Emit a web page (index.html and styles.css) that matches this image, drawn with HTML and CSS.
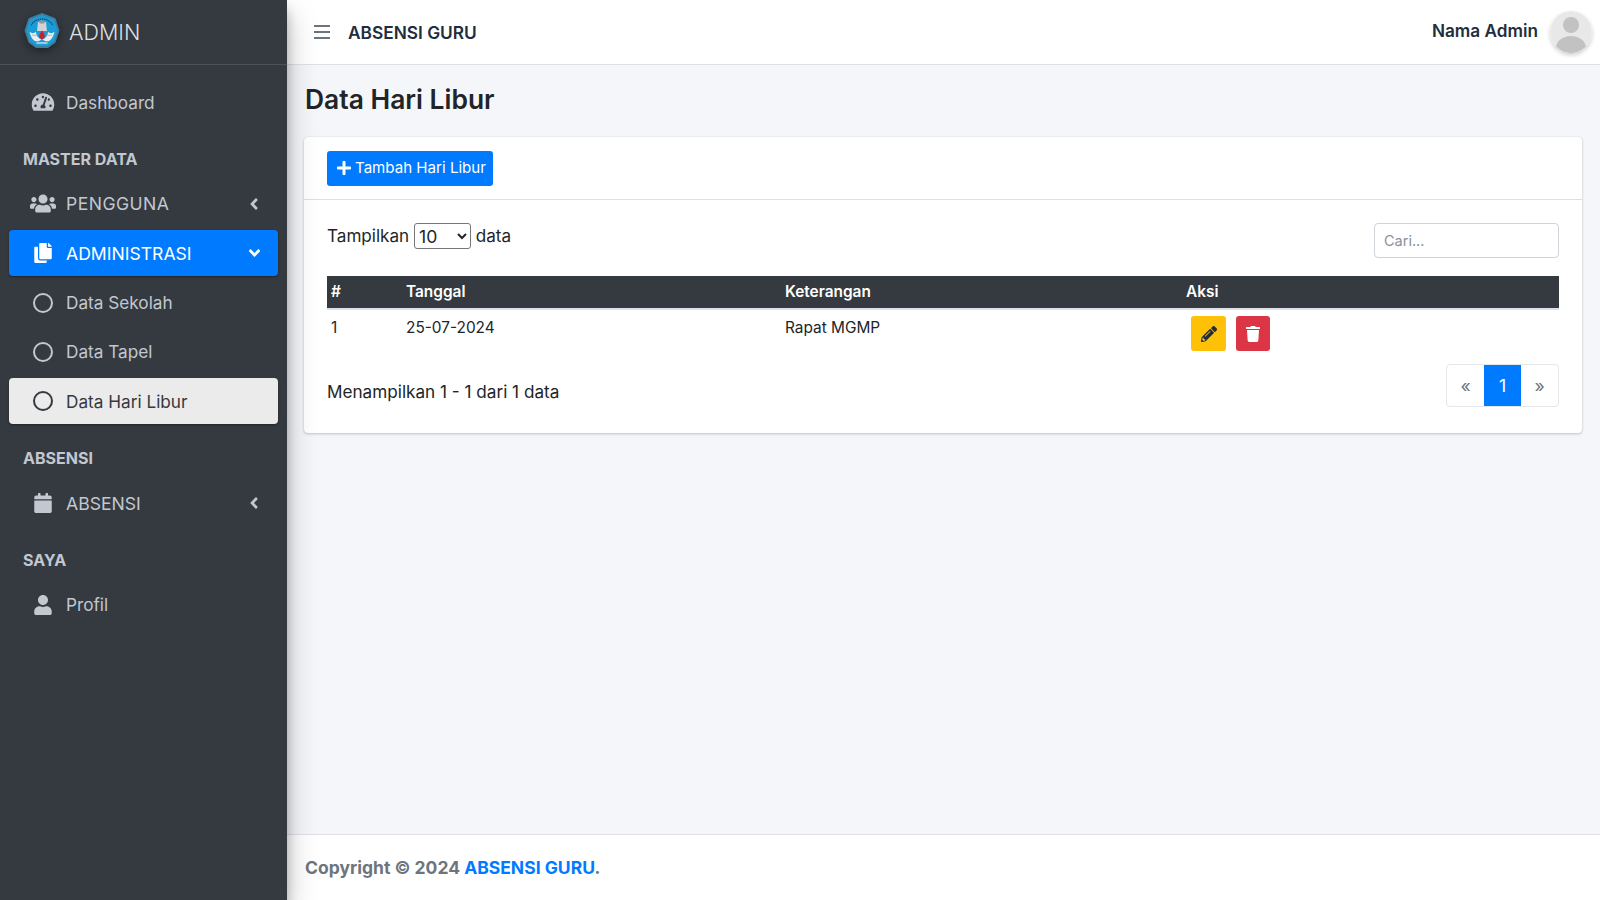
FILE: index.html
```html
<!DOCTYPE html>
<html lang="id">
<head>
<meta charset="utf-8">
<title>Data Hari Libur</title>
<link rel="stylesheet" href="styles.css">
</head>
<body>
<div class="app">
  <aside class="sidebar">
    <div class="brand">
      <svg class="logo" viewBox="0 0 36 36"><path d="M18 1 31 6 35 18 31 30 24 35 12 35 5 30 1 18 5 6Z" fill="#3f7d9f" stroke="#3f7d9f" stroke-width="1" stroke-linejoin="round"/><path d="M18 2.500 30 7 33.500 18 30 29 23.500 33.500 12.500 33.500 6 29 2.500 18 6 7Z" fill="#1a9cd8"/><path d="M7 13A12.500 12.500 0 0 1 29 13" fill="none" stroke="#0e4f78" stroke-width="1.300" stroke-dasharray="1.500 .7"/><path d="M14 9.500h8l1 9h-10z" fill="#cfd3d6"/><path d="M15.500 8h5v3h-5z" fill="#8e979d"/><path d="M17.500 27C12 31 8 28.500 5.500 19.500c2.500 1.500 4.500 1.500 6.500 0 .2 3.500 2 6 5.500 7.500z" fill="#eceded"/><path d="M18.500 27C24 31 28 28.500 30.500 19.500c-2.500 1.500-4.500 1.500-6.500 0-.2 3.500-2 6-5.500 7.500z" fill="#eceded"/><path d="M8 22.500c2 .5 4 .5 5.500-.5M28 22.500c-2 .5-4 .5-5.500-.5" stroke="#9aa3a8" stroke-width=".8" fill="none"/><path d="M18 18c1.800 2.500 2.700 4.300 2.700 5.800a2.700 2.700 0 0 1-5.400 0c0-1.500.9-3.300 2.700-5.800z" fill="#c8202f"/><path d="M12.500 30.500h11" stroke="#e9edef" stroke-width="1.200"/></svg>
      <span class="brand-text">ADMIN</span>
    </div>
    <nav class="menu">
      <a class="item"><span class="ico"><svg class="i20" viewBox="0 0 576 512"><path d="M288 32C128.94 32 0 160.94 0 320c0 52.8 14.25 102.26 39.06 144.8 5.61 9.62 16.3 15.2 27.44 15.2h443c11.14 0 21.83-5.58 27.44-15.2C561.75 422.26 576 372.8 576 320c0-159.06-128.94-288-288-288zm0 64c14.71 0 26.58 10.13 30.32 23.65-1.11 2.26-2.64 4.23-3.45 6.67l-9.22 27.67c-5.13 3.49-10.97 6.01-17.64 6.01-17.67 0-32-14.33-32-32S270.33 96 288 96zM96 384c-17.67 0-32-14.33-32-32s14.33-32 32-32 32 14.33 32 32-14.33 32-32 32zm48-160c-17.67 0-32-14.33-32-32s14.33-32 32-32 32 14.33 32 32-14.33 32-32 32zm246.77-72.41l-61.33 184C343.13 347.33 352 364.54 352 384c0 11.72-3.38 22.55-8.88 32H232.88c-5.5-9.45-8.88-20.28-8.88-32 0-33.94 26.5-61.43 59.9-63.59l61.34-184.01c4.17-12.56 17.73-19.45 30.36-15.17 12.57 4.19 19.35 17.79 15.17 30.36zm14.66 57.2l15.52-46.55c3.47-1.29 7.13-2.23 11.05-2.23 17.67 0 32 14.33 32 32s-14.33 32-32 32c-11.38-.01-20.89-6.28-26.57-15.22zM480 384c-17.67 0-32-14.33-32-32s14.33-32 32-32 32 14.33 32 32-14.33 32-32 32z"/></svg></span>Dashboard</a>
      <div class="head">MASTER DATA</div>
      <a class="item caps wide"><span class="ico"><svg class="i20 i-wide" viewBox="0 0 640 512"><path d="M96 224c35.3 0 64-28.7 64-64s-28.7-64-64-64-64 28.7-64 64 28.7 64 64 64zm448 0c35.3 0 64-28.7 64-64s-28.7-64-64-64-64 28.7-64 64 28.7 64 64 64zm32 32h-64c-17.6 0-33.5 7.1-45.1 18.6 40.3 22.1 68.9 62 75.1 109.4h66c17.7 0 32-14.3 32-32v-32c0-35.3-28.7-64-64-64zm-256 0c61.9 0 112-50.1 112-112S381.9 32 320 32 208 82.1 208 144s50.1 112 112 112zm76.8 32h-8.3c-20.8 10-43.9 16-68.5 16s-47.6-6-68.5-16h-8.3C179.6 288 128 339.6 128 403.2V432c0 26.5 21.5 48 48 48h288c26.5 0 48-21.5 48-48v-28.8c0-63.6-51.6-115.2-115.2-115.2zm-223.7-13.4C161.5 263.1 145.6 256 128 256H64c-35.3 0-64 28.7-64 64v32c0 17.7 14.3 32 32 32h65.9c6.3-47.4 34.9-87.3 75.2-109.4z"/></svg></span>PENGGUNA<svg class="chev" viewBox="0 0 256 512"><path d="M31.7 239l136-136c9.4-9.4 24.6-9.4 33.9 0l22.6 22.6c9.4 9.4 9.4 24.6 0 33.9L127.9 256l96.4 96.4c9.4 9.4 9.4 24.6 0 33.9L201.7 409c-9.4 9.4-24.6 9.4-33.9 0l-136-136c-9.5-9.4-9.5-24.6-.1-34z"/></svg></a>
      <a class="item caps primary"><span class="ico"><svg class="i20" viewBox="0 0 448 512"><path d="M320 448v40c0 13.255-10.745 24-24 24H24c-13.255 0-24-10.745-24-24V120c0-13.255 10.745-24 24-24h72v296c0 30.879 25.121 56 56 56h168zm0-344V0H152c-13.255 0-24 10.745-24 24v368c0 13.255 10.745 24 24 24h272c13.255 0 24-10.745 24-24V128H344c-13.2 0-24-10.8-24-24zm120.971-31.029L375.029 7.029A24 24 0 0 0 358.059 0H352v96h96v-6.059a24 24 0 0 0-7.029-16.97z"/></svg></span>ADMINISTRASI<svg class="chev chev-down" viewBox="0 0 320 512"><path d="M143 352.3L7 216.3c-9.4-9.4-9.4-24.6 0-33.9l22.6-22.6c9.4-9.4 24.6-9.4 33.9 0l96.4 96.4 96.4-96.4c9.4-9.4 24.6-9.4 33.9 0l22.6 22.6c9.4 9.4 9.4 24.6 0 33.9l-136 136c-9.2 9.4-24.4 9.4-33.8 0z"/></svg></a>
      <a class="item"><span class="ico"><span class="ring"></span></span>Data Sekolah</a>
      <a class="item"><span class="ico"><span class="ring"></span></span>Data Tapel</a>
      <a class="item current"><span class="ico"><span class="ring"></span></span>Data Hari Libur</a>
      <div class="head">ABSENSI</div>
      <a class="item caps"><span class="ico"><svg class="i20" viewBox="0 0 448 512"><path d="M12 192h424c6.6 0 12 5.4 12 12v260c0 26.5-21.5 48-48 48H48c-26.5 0-48-21.5-48-48V204c0-6.6 5.4-12 12-12zm436-44v-36c0-26.5-21.5-48-48-48h-48V12c0-6.6-5.4-12-12-12h-40c-6.6 0-12 5.4-12 12v52H160V12c0-6.6-5.4-12-12-12h-40c-6.6 0-12 5.4-12 12v52H48C21.5 64 0 85.5 0 112v36c0 6.6 5.4 12 12 12h424c6.6 0 12-5.4 12-12z"/></svg></span>ABSENSI<svg class="chev" viewBox="0 0 256 512"><path d="M31.7 239l136-136c9.4-9.4 24.6-9.4 33.9 0l22.6 22.6c9.4 9.4 9.4 24.6 0 33.9L127.9 256l96.4 96.4c9.4 9.4 9.4 24.6 0 33.9L201.7 409c-9.4 9.4-24.6 9.4-33.9 0l-136-136c-9.5-9.4-9.5-24.6-.1-34z"/></svg></a>
      <div class="head">SAYA</div>
      <a class="item"><span class="ico"><svg class="i20" viewBox="0 0 448 512"><path d="M224 256c70.7 0 128-57.3 128-128S294.7 0 224 0 96 57.3 96 128s57.3 128 128 128zm89.6 32h-16.7c-22.2 10.2-46.9 16-72.9 16s-50.6-5.8-72.9-16h-16.7C60.2 288 0 348.2 0 422.4V464c0 26.5 21.5 48 48 48h352c26.5 0 48-21.5 48-48v-41.6c0-74.2-60.2-134.4-134.4-134.4z"/></svg></span>Profil</a>
    </nav>
  </aside>
  <div class="main">
    <header class="topbar">
      <div class="burger"><span></span><span></span><span></span></div>
      <div class="app-name">ABSENSI GURU</div>
      <div class="user">
        <span class="user-name">Nama Admin</span>
        <svg class="avatar" viewBox="0 0 42 42"><defs><clipPath id="av"><circle cx="21" cy="21" r="21"/></clipPath></defs><g clip-path="url(#av)"><rect width="42" height="42" fill="#e8e8e8"/><circle cx="21" cy="14" r="8" fill="#c2c2c2"/><ellipse cx="21" cy="37" rx="15" ry="12" fill="#c2c2c2"/></g></svg>
      </div>
    </header>
    <main class="content">
      <h1 class="title">Data Hari Libur</h1>
      <section class="card">
        <div class="card-head">
          <button class="btn-add"><svg class="plus" viewBox="0 0 448 512"><path d="M416 208H272V64c0-17.67-14.33-32-32-32h-32c-17.67 0-32 14.33-32 32v144H32c-17.67 0-32 14.33-32 32v32c0 17.67 14.33 32 32 32h144v144c0 17.67 14.33 32 32 32h32c17.67 0 32-14.33 32-32V304h144c17.67 0 32-14.33 32-32v-32c0-17.67-14.33-32-32-32z"/></svg>Tambah Hari Libur</button>
        </div>
        <div class="card-body">
          <div class="tools">
            <div class="length">Tampilkan <select class="sel"><option>10</option></select> data</div>
            <input class="search" placeholder="Cari...">
          </div>
          <table class="tbl">
            <thead>
              <tr><th class="c1">#</th><th class="c2">Tanggal</th><th class="c3">Keterangan</th><th>Aksi</th></tr>
            </thead>
            <tbody>
              <tr>
                <td>1</td><td>25-07-2024</td><td>Rapat MGMP</td>
                <td><div class="acts">
                  <span class="act edit"><svg class="i16" viewBox="0 0 512 512"><path d="M497.9 142.1l-46.1 46.1c-4.7 4.7-12.3 4.7-17 0l-111-111c-4.7-4.7-4.7-12.3 0-17l46.1-46.1c18.7-18.7 49.1-18.7 67.9 0l60.1 60.1c18.8 18.7 18.8 49.1 0 67.9zM284.2 99.8L21.6 362.4.4 483.9c-2.9 16.4 11.4 30.6 27.8 27.8l121.5-21.3 262.6-262.6c4.7-4.7 4.7-12.3 0-17l-111-111c-4.8-4.7-12.4-4.7-17.1 0zM124.1 339.9c-5.5-5.5-5.5-14.3 0-19.8l154-154c5.5-5.5 14.3-5.5 19.8 0s5.5 14.3 0 19.8l-154 154c-5.5 5.5-14.3 5.5-19.8 0zM88 424h48v36.3l-64.5 11.3-31.1-31.1L51.7 376H88v48z"/></svg></span>
                  <span class="act del"><svg class="i16" viewBox="0 0 448 512"><path d="M432 32H312l-9.4-18.7A24 24 0 0 0 281.1 0H166.8a23.72 23.72 0 0 0-21.4 13.3L136 32H16A16 16 0 0 0 0 48v32a16 16 0 0 0 16 16h416a16 16 0 0 0 16-16V48a16 16 0 0 0-16-16zM53.2 467a48 48 0 0 0 47.9 45h245.8a48 48 0 0 0 47.9-45L416 128H32z"/></svg></span>
                </div></td>
              </tr>
            </tbody>
          </table>
          <div class="foot-row">
            <div class="info">Menampilkan 1 - 1 dari 1 data</div>
            <div class="pager"><span class="pg pg-first">«</span><span class="pg pg-on">1</span><span class="pg pg-last">»</span></div>
          </div>
        </div>
      </section>
    </main>
    <footer class="footer"><strong>Copyright © 2024 <a class="foot-link">ABSENSI GURU</a>.</strong></footer>
  </div>
</div>
</body>
</html>
```
FILE: styles.css
```css
* { box-sizing: border-box; }
html, body { height: 100%; margin: 0; }
body { font-family: Inter, "Noto Sans", sans-serif; font-size: 16px; color: #212529; background: #f4f6f9; overflow: hidden; }
.app { display: flex; height: 900px; }
.sidebar { width: 287px; flex: none; background: #343a40; box-shadow: 0 14px 28px rgba(0,0,0,.25), 0 10px 10px rgba(0,0,0,.22); z-index: 2; }
.brand { height: 65px; display: flex; align-items: center; padding-left: 24px; gap: 9px; border-bottom: 1px solid #4b545c; }
.logo { width: 36px; height: 37px; filter: drop-shadow(0 3px 4px rgba(0,0,0,.4)); margin-top: -4px; }
.brand-text { font-size: 21.5px; font-weight: 300; color: rgba(255,255,255,.85); margin-top: -1px; }
.menu { display: flex; flex-direction: column; padding: 14px 9px 8px; }
.item { height: 46px; margin-bottom: 3.4px; display: flex; align-items: center; border-radius: 4px; color: #c2c7d0; font-size: 17.2px; padding-left: 14px; padding-right: 19px; }
.caps { font-size: 17.6px; }
.wide { letter-spacing: .45px; }
.ico { width: 43px; flex: none; display: flex; justify-content: center; padding-right: 4px; color: #c2c7d0; }
.i20 { height: 20px; width: 24px; fill: currentColor; }
.i-wide { width: 26px; height: 21px; }
.ring { width: 20px; height: 20px; border: 2px solid currentColor; border-radius: 50%; }
.chev { margin-left: auto; width: 10px; height: 18px; fill: currentColor; }
.chev-down { width: 13px; margin-right: -2px; }
.primary { background: #007bff; color: #fff; box-shadow: 0 1px 3px rgba(0,0,0,.12), 0 1px 2px rgba(0,0,0,.24); }
.primary .ico { color: #fff; }
.current { background: #ebebec; color: #343a40; box-shadow: 0 1px 3px rgba(0,0,0,.12), 0 1px 2px rgba(0,0,0,.24); }
.current .ico { color: #343a40; }
.head { height: 52.4px; padding: 20.5px 0 0 14px; color: #c2c7d0; font-size: 16px; font-weight: 700; }
.main { flex: 1; display: flex; flex-direction: column; min-width: 0; }
.topbar { height: 65px; flex: none; display: flex; align-items: center; background: #fff; border-bottom: 1px solid #dee2e6; padding: 0 8px 0 27px; }
.burger { width: 16px; display: flex; flex-direction: column; gap: 4px; margin-right: 18px; }
.burger span { display: block; height: 2px; background: #6c757d; }
.app-name { font-size: 17.3px; font-weight: 600; color: #1f2d3d; }
.user { margin-left: auto; display: flex; align-items: center; gap: 12px; }
.user-name { font-size: 17.2px; font-weight: 600; color: #1f2d3d; margin-top: -3px; }
.avatar { width: 42px; height: 42px; border-radius: 50%; box-shadow: 0 2px 4px rgba(0,0,0,.2); }
.content { flex: 1; padding: 0 18px 0 17px; }
.title { margin: 16px 0 20px 1px; font-size: 26.4px; font-weight: 600; line-height: 36px; color: #212529; }
.card { background: #fff; border-radius: 4px; box-shadow: 0 0 1px rgba(0,0,0,.125), 0 1px 3px rgba(0,0,0,.2); }
.card-head { height: 63px; padding: 14px 23px; border-bottom: 1px solid rgba(0,0,0,.125); }
.btn-add { display: flex; align-items: center; gap: 4px; height: 35px; padding: 0 7px 2px 10px; border: 0; border-radius: 3px; background: #007bff; color: #fff; font: 15.1px Inter, sans-serif; }
.plus { width: 14px; height: 16px; fill: #fff; }
.card-body { padding: 24px 23px 0; height: 233px; }
.tools { display: flex; justify-content: space-between; height: 52px; }
.length { font-size: 17.1px; margin-top: 1px; }
.sel { width: 57px; height: 26px; font: 17.6px Inter, sans-serif; margin: -2px 0 0; vertical-align: middle; background: #fff; border: 1px solid #767676; border-radius: 3px; color: #212529; }
.search { width: 185px; height: 35px; border: 1px solid #ced4da; border-radius: 4px; padding: 0 9px; font: 14.5px Inter, sans-serif; margin-top: -1px; }
.search::placeholder { color: #8c9198; }
.tbl { width: 100%; border-collapse: collapse; table-layout: fixed; font-size: 15.4px; }
.tbl th { background: #343a40; color: #fff; height: 33px; text-align: left; padding: 0 4px 2px; font-weight: 600; border-bottom: 2px solid #dee2e6; }
.tbl td { padding: 8px 4px 4px; vertical-align: top; height: 45px; color: #212529; }
.c1 { width: 75px; }
.c2 { width: 379px; }
.c3 { width: 401px; }
.acts { display: flex; gap: 10px; padding-left: 5px; margin-top: -2px; }
.act { width: 35px; height: 35px; border-radius: 3px; display: flex; align-items: center; justify-content: center; }
.edit { background: #ffc107; color: #1f2d3d; }
.del { background: #dc3545; color: #fff; width: 34px; }
.i16 { height: 16px; width: 16px; fill: currentColor; }
.foot-row { display: flex; justify-content: space-between; margin-top: 9px; }
.info { font-size: 17.15px; margin-top: 17px; }
.pager { display: flex; height: 43px; border: 1px solid #e4e7ea; border-radius: 4px; overflow: hidden; }
.pg { display: flex; align-items: center; justify-content: center; width: 37px; color: #6c757d; font-size: 17.6px; }
.pg-on { background: #007bff; color: #fff; }
.footer { height: 66px; flex: none; display: flex; align-items: center; background: #fff; border-top: 1px solid #dee2e6; padding-left: 18px; color: #6c757d; font-size: 17.5px; }
.foot-link { color: #007bff; }
```
